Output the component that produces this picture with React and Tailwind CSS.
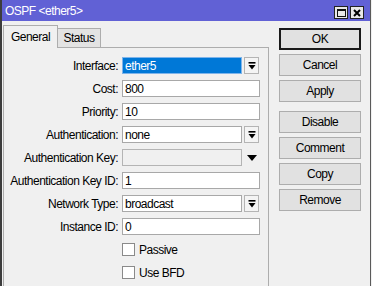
import React from 'react';

const font = { fontFamily: '"Liberation Sans", Arial, sans-serif' };

// Winbox-style drop-down arrow: bar on top, triangle under it
const DropIcon = () => (
  <svg width="8" height="8" viewBox="0 0 8 8">
    <rect x="0.5" y="0" width="7" height="1.6" fill="#000" />
    <polygon points="0.5,3 7.5,3 4,7.5" fill="#000" />
  </svg>
);

const Row = ({ label, children }) => (
  <div className="flex items-center h-[17px]">
    <div className="w-[114px] text-right pr-0 shrink-0">{label}</div>
    <div className="ml-[4px] flex items-center">{children}</div>
  </div>
);

const TextBox = ({ value, wide = true, selected = false, disabled = false }) => (
  <div
    className={
      'h-[17px] flex items-center pl-[2px] border ' +
      (wide ? 'w-[138px] ' : 'w-[120px] ') +
      (selected
        ? 'bg-[#0078d7] border-[#7eb4ea] text-white'
        : disabled
        ? 'bg-[#f0f0f0] border-[#b4b4b4]'
        : 'bg-white border-[#a8a8a8]')
    }
  >
    {value}
  </div>
);

const DropButton = () => (
  <div className="ml-[2px] w-[15px] h-[17px] border border-[#b4b4b4] bg-[#f4f4f4] flex items-center justify-center">
    <DropIcon />
  </div>
);

const Check = ({ label }) => (
  <div className="flex items-center h-[17px] pl-[118px]">
    <div className="w-[13px] h-[13px] border border-[#8a8a8a] bg-white" />
    <span className="ml-[4px]">{label}</span>
  </div>
);

const Btn = ({ children, primary = false, className = '' }) => (
  <div
    className={
      'h-[22px] w-[82px] flex items-center justify-center bg-[#e1e1e1] ' +
      (primary ? 'border-2 border-[#1a1a1a] ' : 'border border-[#adadad] ') +
      className
    }
  >
    {children}
  </div>
);

export default function App() {
  return (
    <div
      className="w-[372px] h-[286px] overflow-hidden bg-[#f0f0f0] text-[12px] tracking-[-0.5px] text-black leading-none"
      style={font}
    >
      <div className="w-[371px] h-full border-l-2 border-r border-l-[#3c3c3c] border-r-[#5a5a5a] flex flex-col">
        {/* title bar */}
        <div className="h-[21px] bg-[#6161d5] flex items-end justify-between pl-[3px] pr-[6px] pb-[2px] shrink-0">
          <span className="text-white text-[12px] mb-[2px]">OSPF &lt;ether5&gt;</span>
          <div className="flex gap-[2px]">
            <div className="w-[14px] h-[13px] bg-[#e8e8e8] border border-[#222] flex items-center justify-center">
              <div className="w-[9px] h-[8px] border border-[#111] border-t-2" />
            </div>
            <div className="w-[14px] h-[13px] bg-[#e8e8e8] border border-[#222] flex items-center justify-center">
              <svg width="8" height="8" viewBox="0 0 8 8">
                <path d="M1 1 L7 7 M7 1 L1 7" stroke="#000" strokeWidth="2" />
              </svg>
            </div>
          </div>
        </div>

        {/* body */}
        <div className="flex flex-1">
          {/* tabbed panel */}
          <div className="ml-[1px] w-[266px] pt-[4px] flex flex-col">
            <div className="flex items-end h-[22px]">
              <div className="relative z-10 -mb-px h-[23px] w-[55px] border border-b-0 border-[#adadad] bg-[#f0f0f0] flex items-center justify-center">
                General
              </div>
              <div className="h-[19px] w-[43px] border border-l-0 border-b-0 border-[#adadad] bg-[#e3e3e3] flex items-center justify-center">
                Status
              </div>
            </div>
            <div className="flex-1 border border-b-0 border-[#adadad] pt-[9px] flex flex-col gap-[6px]">
              <Row label="Interface:">
                <TextBox value="ether5" wide={false} selected />
                <DropButton />
              </Row>
              <Row label="Cost:">
                <TextBox value="800" />
              </Row>
              <Row label="Priority:">
                <TextBox value="10" />
              </Row>
              <Row label="Authentication:">
                <TextBox value="none" wide={false} />
                <DropButton />
              </Row>
              <Row label="Authentication Key:">
                <TextBox value="" wide={false} disabled />
                <div className="ml-[2px] w-[15px] h-[17px] flex items-center justify-center">
                  <svg width="10" height="6" viewBox="0 0 10 6">
                    <polygon points="0,0 10,0 5,6" fill="#000" />
                  </svg>
                </div>
              </Row>
              <Row label="Authentication Key ID:">
                <TextBox value="1" />
              </Row>
              <Row label="Network Type:">
                <TextBox value="broadcast" wide={false} />
                <DropButton />
              </Row>
              <Row label="Instance ID:">
                <TextBox value="0" />
              </Row>
              <Check label="Passive" />
              <Check label="Use BFD" />
            </div>
          </div>

          {/* button column */}
          <div className="ml-[10px] pt-[7px] flex flex-col gap-[4px]">
            <Btn primary>OK</Btn>
            <Btn>Cancel</Btn>
            <Btn>Apply</Btn>
            <Btn className="mt-[5px]">Disable</Btn>
            <Btn>Comment</Btn>
            <Btn>Copy</Btn>
            <Btn>Remove</Btn>
          </div>
        </div>
      </div>
    </div>
  );
}
